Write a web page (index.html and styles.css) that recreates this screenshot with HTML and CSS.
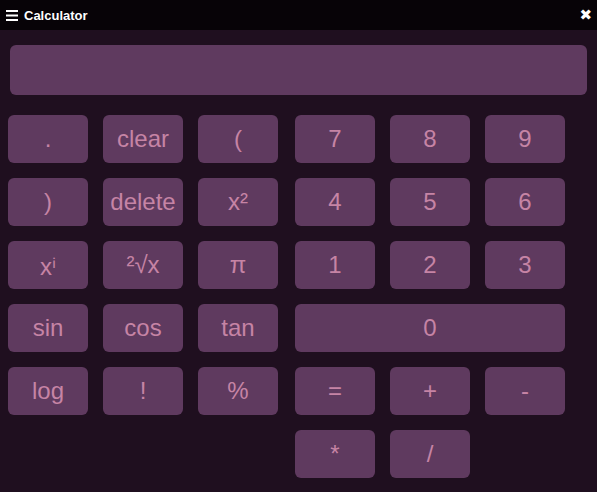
FILE: index.html
```html
<!DOCTYPE html>
<html>
<head>
<meta charset="utf-8">
<link rel="stylesheet" href="styles.css">
</head>
<body>
<div class="titlebar">
  <div class="title">
    <svg class="menu" width="12" height="11" viewBox="0 0 12 11"><rect x="0" y="0" width="12" height="2" fill="#fff"/><rect x="0" y="4.5" width="12" height="2" fill="#fff"/><rect x="0" y="9" width="12" height="2" fill="#fff"/></svg>
    Calculator
  </div>
  <span class="close">✖</span>
</div>
<main class="app">
  <div class="display"></div>
  <div class="keys">
    <div class="pad">
      <button class="key">.</button>
      <button class="key">clear</button>
      <button class="key">(</button>
      <button class="key">)</button>
      <button class="key">delete</button>
      <button class="key">x²</button>
      <button class="key">xⁱ</button>
      <button class="key">²√x</button>
      <button class="key">π</button>
      <button class="key">sin</button>
      <button class="key">cos</button>
      <button class="key">tan</button>
      <button class="key">log</button>
      <button class="key">!</button>
      <button class="key">%</button>
    </div>
    <div class="pad">
      <button class="key">7</button>
      <button class="key">8</button>
      <button class="key">9</button>
      <button class="key">4</button>
      <button class="key">5</button>
      <button class="key">6</button>
      <button class="key">1</button>
      <button class="key">2</button>
      <button class="key">3</button>
      <button class="key wide">0</button>
      <button class="key">=</button>
      <button class="key">+</button>
      <button class="key">-</button>
      <button class="key">*</button>
      <button class="key">/</button>
    </div>
  </div>
</main>
</body>
</html>
```

FILE: styles.css
```css
html, body {
  margin: 0;
  padding: 0;
  background: #1f0f1f;
  height: 100%;
  overflow: hidden;
}
body {
  font-family: "Liberation Sans", Arial, sans-serif;
}
.titlebar {
  height: 30px;
  background: #070307;
  display: flex;
  align-items: center;
  justify-content: space-between;
  padding: 0 5px 0 6px;
  color: #ffffff;
}
.title {
  font-weight: bold;
  font-size: 13px;
  display: flex;
  align-items: center;
}
.menu {
  margin-right: 6px;
}
.close {
  font-size: 15px;
  line-height: 1;
  font-family: "DejaVu Sans", sans-serif;
}
.app {
  padding: 15px 10px 0 8px;
}
.display {
  height: 50px;
  margin-left: 2px;
  background: #5f3a5f;
  border-radius: 6px;
}
.keys {
  display: flex;
  gap: 17px;
  margin-top: 20px;
}
.pad {
  display: grid;
  grid-template-columns: repeat(3, 80px);
  grid-auto-rows: 48px;
  gap: 15px;
}
.key {
  background: #5f3a5f;
  color: #c684a5;
  border: none;
  border-radius: 6px;
  font-family: "Liberation Sans", Arial, sans-serif;
  font-size: 24px;
  padding: 0;
}
.wide {
  grid-column: span 3;
}
```
